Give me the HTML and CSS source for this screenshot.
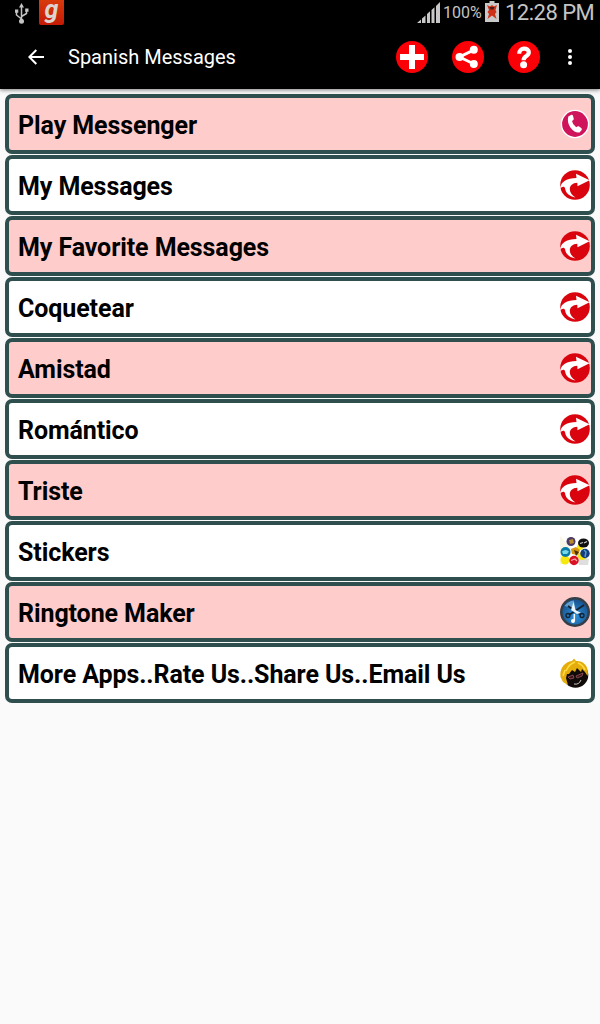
FILE: index.html
```
<!DOCTYPE html>
<html lang="es">
<head>
    <meta charset="UTF-8">
    <meta name="viewport" content="width=device-width, initial-scale=1.0">
    <title>Spanish Messages</title>
    <link rel="stylesheet" href="styles.css">
</head>
<body>
    <svg class="defs" width="0" height="0">
        <symbol id="arrow" viewBox="0 0 30 30">
            <circle cx="15" cy="15" r="14.8" fill="#d9040d"/>
            <path d="M0.2 19C0.500 11.500 7 8 16.500 8L16 3.800L29.600 10.300L17.500 16.200L17.300 12.700C12.500 13 9.800 15.500 9.800 19C9.800 22.500 12 25.500 15.500 27.500C9.500 26.500 5.500 23 5 18C4 15.800 1.500 16.500 0.200 19Z" fill="#fff"/>
        </symbol>
    </svg>

    <div class="status">
        <svg class="usb" width="16" height="23" viewBox="0 0 16 23">
            <path d="M7.500 4V20M7.500 17L2.500 13V9M7.500 14.500L12.500 11.500V8" fill="none" stroke="#c4c4c4" stroke-width="1.500"/>
            <path d="M7.500 1L10 5.500H5Z M1 7.500H4.300V10.800H1Z M11.200 6.500H14.500V9.800H11.200Z" fill="#c4c4c4"/>
            <circle cx="7.500" cy="19.300" r="2.500" fill="#c4c4c4"/>
        </svg>
        <div class="gaana">g</div>
        <svg class="signal" width="23" height="21" viewBox="0 0 23 21">
            <path d="M0 21L4 17.500V21ZM5 16.500L8.500 13.500V21H5ZM10 12L13 9.200V21H10ZM14.500 8L17.500 5.200V21H14.500ZM19 4L23 0V21H19Z" fill="#c8c8c8"/>
        </svg>
        <span class="percent">100%</span>
        <svg class="battery" width="14" height="21" viewBox="0 0 14 21">
            <path d="M4.500 0H9.500V2H14V21H0V2H4.500Z" fill="#c9c9c9"/>
            <path d="M2 4L5 5.500L7 4L9 5.500L12 4L10.500 9L11.500 11L10 13L11.500 18L7 14.500L2.500 18L4 13L2.500 11L4 9Z" fill="#cf3018"/>
            <path d="M4.500 6H9.500L8.500 8.500H5.500Z" fill="#4b1c16"/>
        </svg>
        <span class="clock">12:28 PM</span>
    </div>

    <header class="toolbar">
        <svg class="back" width="16" height="16" viewBox="0 0 16 16">
            <path d="M16 8H1.500M8.300 1L1.300 8L8.300 15" fill="none" stroke="#fff" stroke-width="2"/>
        </svg>
        <h1>Spanish Messages</h1>
        <div class="actions">
            <svg width="32" height="32" viewBox="0 0 32 32">
                <circle cx="16" cy="16" r="16" fill="#fb0006"/>
                <path d="M13 4H19V13H28V19H19V28H13V19H4V13H13Z" fill="#fff"/>
            </svg>
            <svg width="32" height="32" viewBox="0 0 32 32">
                <circle cx="16" cy="16" r="16" fill="#fb0006"/>
                <path d="M22 8.800L7.500 16L22 23" fill="none" stroke="#fff" stroke-width="3"/>
                <circle cx="21.800" cy="8.800" r="4" fill="#fff"/>
                <circle cx="7.600" cy="16" r="4.100" fill="#fff"/>
                <circle cx="21.800" cy="23" r="4" fill="#fff"/>
            </svg>
            <svg width="32" height="32" viewBox="0 0 32 32">
                <circle cx="16" cy="16" r="16" fill="#fb0006"/>
                <path d="M11.200 12.800C11.200 5.800 20.800 6.300 20.800 11.500C20.800 15.500 15.600 14.500 15.600 19.300" fill="none" stroke="#fff" stroke-width="4.200"/>
                <circle cx="15.600" cy="23.800" r="3.500" fill="#fff"/>
            </svg>
            <svg class="more" width="4" height="16" viewBox="0 0 4 16">
                <circle cx="2" cy="2" r="2" fill="#fff"/>
                <circle cx="2" cy="8" r="2" fill="#fff"/>
                <circle cx="2" cy="14" r="2" fill="#fff"/>
            </svg>
        </div>
    </header>

    <ul class="list">
        <li>
            <span>Play Messenger</span>
            <svg width="30" height="30" viewBox="0 0 30 30">
                <circle cx="15" cy="15" r="13.600" fill="#cf145c" stroke="#fff" stroke-width="1.400"/>
                <path d="M8.300 7.500L11.500 5.800Q12.600 5.600 13 6.800L13.800 10Q13.800 11.200 12 12Q12.500 15.500 16.200 18.300Q17.800 16.700 18.800 17.300L21.500 19.300Q22.300 20.200 21.500 21.300L19.500 23.500C13.500 24.500 6 16 8.300 7.500Z" fill="#fff"/>
            </svg>
        </li>
        <li><span>My Messages</span><svg width="30" height="30"><use href="#arrow"/></svg></li>
        <li><span>My Favorite Messages</span><svg width="30" height="30"><use href="#arrow"/></svg></li>
        <li><span>Coquetear</span><svg width="30" height="30"><use href="#arrow"/></svg></li>
        <li><span>Amistad</span><svg width="30" height="30"><use href="#arrow"/></svg></li>
        <li><span>Romántico</span><svg width="30" height="30"><use href="#arrow"/></svg></li>
        <li><span>Triste</span><svg width="30" height="30"><use href="#arrow"/></svg></li>
        <li>
            <span>Stickers</span>
            <svg width="30" height="30" viewBox="0 0 30 30">
                <path d="M0 0L14 15L0 29Z" fill="#f7f4e8"/>
                <path d="M16 18L29 23L28 29H19Z" fill="#dedede"/>
                <circle cx="5" cy="24" r="4.500" fill="#f5e910"/>
                <circle cx="20" cy="11" r="3" fill="#f5e910"/>
                <circle cx="22" cy="20" r="4" fill="#f5e910"/>
                <circle cx="11" cy="5.500" r="4.500" fill="#4c3a64"/>
                <path d="M9 4L13 3L14 7L10 8Z" fill="#b88b28"/>
                <ellipse cx="23.500" cy="7" rx="5.500" ry="4.500" fill="#101010"/>
                <path d="M20 7.500L23 6.500M24 7L27 5.500" stroke="#ccc" stroke-width="1.200"/>
                <circle cx="5.500" cy="16" r="5" fill="#087aa5"/>
                <path d="M2 15.500Q5.500 12.500 9 15.500L7 18H3Z" fill="#75d8e8"/>
                <path d="M11 13L16 11L20 14L18 19L12 18Z" fill="#d89612"/>
                <path d="M14 14L19 16L16 20Z" fill="#45320c"/>
                <circle cx="25" cy="17.500" r="4.700" fill="#153c7d"/>
                <path d="M24 14L26 16L25 21" fill="none" stroke="#4c9fcc" stroke-width="1.500"/>
                <circle cx="14" cy="24.500" r="4.700" fill="#d81224"/>
                <path d="M11 24.500L15 23L17 25" fill="none" stroke="#f6aaa5" stroke-width="1.200"/>
            </svg>
        </li>
        <li>
            <span>Ringtone Maker</span>
            <svg width="30" height="30" viewBox="0 0 30 30">
                <defs>
                    <radialGradient id="blue" cx="50%" cy="65%" r="60%">
                        <stop offset="0" stop-color="#2b93dd"/>
                        <stop offset="1" stop-color="#1a5592"/>
                    </radialGradient>
                </defs>
                <circle cx="15" cy="15" r="15" fill="#343e47"/>
                <circle cx="15" cy="15" r="12.500" fill="url(#blue)"/>
                <path d="M4.500 9Q8 4 14 3.500L15 12Z" fill="#5f9dcd"/>
                <path d="M8 9L21 18M24 8L9 18" stroke="#17212d" stroke-width="1.800"/>
                <path d="M11 13L13.500 5L15.500 13L21 16L17 17Z" fill="#e8f5ff"/>
                <circle cx="8" cy="18.500" r="2" fill="none" stroke="#17212d" stroke-width="1.300"/>
                <circle cx="22" cy="18.500" r="2" fill="none" stroke="#17212d" stroke-width="1.300"/>
                <path d="M14.300 17V24" stroke="#fff" stroke-width="1.500"/>
                <circle cx="13" cy="24" r="2" fill="#fff"/>
            </svg>
        </li>
        <li>
            <span>More Apps..Rate Us..Share Us..Email Us</span>
            <svg width="30" height="30" viewBox="0 0 30 30">
                <circle cx="15.500" cy="17" r="12.800" fill="#100b08"/>
                <path d="M0.500 19C-0.500 11 4 4 12 3L14 0.500L16 3C24 2.500 29.500 9 27.500 18L25 14L22 11L21 14L17 10L15 14L12 12L9 16L7 16L6 20L8 27L3 24Z" fill="#e5ad0c"/>
                <path d="M6 13Q9 6 15 4M18 5Q23 7 25 12M3 18L5 12" fill="none" stroke="#ffdf45" stroke-width="1.500"/>
                <path d="M8 19L13 17L14 20L10 21ZM16 18L23 15L22 18L17 20Z" fill="#35151a" stroke="#9c5358" stroke-width=".8"/>
                <path d="M14 26Q19 27 21 22" fill="none" stroke="#ddd" stroke-width=".9"/>
            </svg>
        </li>
    </ul>
</body>
</html>
```

FILE: styles.css
```
* {
    box-sizing: border-box;
}
body {
    margin: 0;
    background: #fafafa;
    font-family: Roboto, "Liberation Sans", sans-serif;
}
svg {
    display: block;
    flex-shrink: 0;
}
.defs {
    position: absolute;
}
.status {
    display: flex;
    height: 25px;
    padding: 0 6px 0 14px;
    background: #000;
    color: #c4c4c4;
}
.usb {
    margin-top: 2px;
}
.gaana {
    width: 25px;
    height: 25px;
    margin-left: 9px;
    border-radius: 0 0 2px 2px;
    background: linear-gradient(#d83a0c, #c51a06);
    color: #ddd3cf;
    font-size: 25px;
    font-style: italic;
    font-weight: bold;
    line-height: 20px;
    text-align: center;
}
.signal {
    margin: 2px 3px 0 auto;
}
.percent {
    width: 39px;
    font-size: 16px;
    line-height: 25px;
    white-space: nowrap;
}
.battery {
    margin: 1px 6px 0 3px;
}
.clock {
    width: 89px;
    font-size: 22px;
    letter-spacing: -0.5px;
    line-height: 25px;
    white-space: nowrap;
}
.toolbar {
    display: flex;
    align-items: center;
    height: 64px;
    padding: 0 28px;
    background: #000;
    color: #fff;
    box-shadow: 0 1px 4px rgba(0, 0, 0, 0.5);
}
.toolbar h1 {
    margin: 0 0 0 24px;
    font-size: 20px;
    font-weight: normal;
    line-height: 24px;
}
.actions {
    display: flex;
    align-items: center;
    gap: 24px;
    margin-left: auto;
}
.more {
    margin-left: 4px;
}
.list {
    display: flex;
    flex-direction: column;
    gap: 1px;
    margin: 0;
    padding: 5px 5px 1px;
    list-style: none;
}
.list li {
    display: flex;
    align-items: center;
    justify-content: space-between;
    height: 60px;
    padding: 0 1px 0 9px;
    border: 4px solid #2f4f4f;
    border-radius: 7px;
    background: #fff;
    color: #000;
    font-size: 25px;
    font-weight: bold;
    letter-spacing: -0.09px;
}
.list li span {
    padding-top: 2px;
}
.list li:nth-child(odd) {
    background: #fecccb;
}
```
